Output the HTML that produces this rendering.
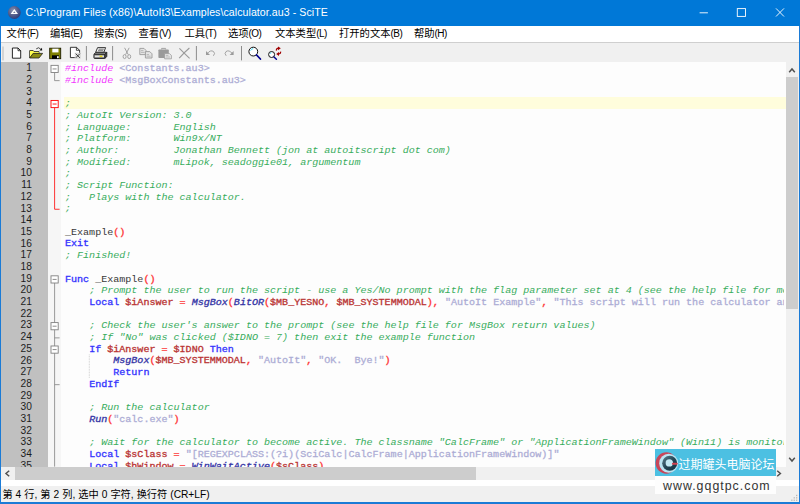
<!DOCTYPE html>
<html><head><meta charset="utf-8"><title>SciTE</title>
<style>
html,body{margin:0;padding:0;}
body{width:800px;height:504px;overflow:hidden;position:relative;background:#f0f0f0;font-family:"Liberation Sans","Noto Sans CJK SC",sans-serif;}
.abs{position:absolute;}
#frame{left:0;top:0;width:800px;height:504px;background:#1b7bd6;}
#title{left:0;top:0;width:800px;height:25.6px;background:#0078d7;}
#ttext{left:25.6px;top:5.2px;color:#fff;font-size:10.6px;line-height:14px;white-space:nowrap;letter-spacing:0.06px;}
#menu{left:1px;top:25.6px;width:798px;height:16.8px;background:#fff;}
#menuline{left:1px;top:42.2px;width:798px;height:1px;background:#cfcfcf;}
.mi{position:absolute;top:27px;font-size:10.3px;line-height:14px;color:#000;white-space:nowrap;}
.mi i{font-style:normal;font-size:10px;letter-spacing:-0.55px;}
#tool{left:1px;top:43.2px;width:798px;height:19.3px;background:#f0f0f0;}
#editor{left:1px;top:62.4px;width:785px;height:404.2px;background:#fdfdfd;}
#nmargin{left:1px;top:62.4px;width:46.5px;height:404.2px;background:#c0c0c0;}
#fmargin{left:47.5px;top:62.4px;width:13.5px;height:404.2px;background:#f6f6f6;}
#caret{left:64.3px;top:97.3px;width:721.7px;height:11.7px;background:#fffddc;}
.ln{position:absolute;left:65px;height:11.69px;line-height:11.69px;font-family:"Liberation Mono",monospace;font-size:10.06px;white-space:pre;color:#000;opacity:0.8;transform-origin:0 8.7px;transform:scaleY(0.88);}
.num{position:absolute;left:1px;width:30.9px;text-align:right;height:11.69px;line-height:11.69px;font-family:"Liberation Sans",sans-serif;font-size:10.2px;color:#000;opacity:0.85;}
.c{color:#009933;font-style:italic;}
.k{color:#0000ff;-webkit-text-stroke:0.35px #0000ff;}
.f{color:#000090;-webkit-text-stroke:0.35px #000090;font-style:italic;}
.v{color:#aa0000;-webkit-text-stroke:0.35px #aa0000;}
.o{color:#ff0000;-webkit-text-stroke:0.35px #ff0000;}
.s{color:#9999cc;-webkit-text-stroke:0.3px #9999cc;}
.p{color:#f000ff;font-style:italic;}
#vscroll{left:786px;top:62.4px;width:12.8px;height:404.2px;background:#f0f0f0;}
#vthumb{left:786px;top:77px;width:12px;height:231.5px;background:#cdcdcd;}
#hscroll{left:1px;top:466.6px;width:798px;height:13.4px;background:#f0f0f0;}
#hthumb{left:15.1px;top:467.3px;width:460.9px;height:12.4px;background:#cdcdcd;}
#band{left:1px;top:480px;width:798px;height:5.8px;background:#fff;}
#status{left:1px;top:485.8px;width:798px;height:16.7px;background:#f0f0f0;}
#stext{left:2.4px;top:487.6px;font-size:10.2px;line-height:14px;color:#000;white-space:nowrap;word-spacing:0.2px;}
#wm1{left:655px;top:449px;width:121px;height:26.7px;background:#4cc0e2;}
#wm2{left:655px;top:475.7px;width:121px;height:18.8px;background:#fdfdfd;}
#wmt{left:678.5px;top:455.3px;font-size:12px;line-height:18px;color:#fff;white-space:nowrap;font-family:"Noto Sans CJK SC",sans-serif;}
#wmu{left:663px;top:477.5px;font-size:12.4px;line-height:16px;color:#333;white-space:nowrap;letter-spacing:1px;font-family:"Liberation Sans",sans-serif;}
svg{position:absolute;left:0;top:0;overflow:visible;}
</style></head><body>
<div id="frame" class="abs"></div>
<div id="title" class="abs"></div>
<div id="ttext" class="abs">C:\Program Files (x86)\AutoIt3\Examples\calculator.au3 - SciTE</div>
<div id="menu" class="abs"></div>
<div id="menuline" class="abs"></div>
<div class="mi" style="left:6.5px">文件<i>(F)</i></div>
<div class="mi" style="left:50px">编辑<i>(E)</i></div>
<div class="mi" style="left:94px">搜索<i>(S)</i></div>
<div class="mi" style="left:138.5px">查看<i>(V)</i></div>
<div class="mi" style="left:184.5px">工具<i>(T)</i></div>
<div class="mi" style="left:228px">选项<i>(O)</i></div>
<div class="mi" style="left:275px">文本类型<i>(L)</i></div>
<div class="mi" style="left:339px">打开的文本<i>(B)</i></div>
<div class="mi" style="left:414px">帮助<i>(H)</i></div>
<div id="tool" class="abs"></div>
<div id="editor" class="abs"></div>
<div id="nmargin" class="abs"></div>
<div id="fmargin" class="abs"></div>
<div id="caret" class="abs"></div>
<div id="codeclip" class="abs" style="left:0;top:62.4px;width:784px;height:404.2px;overflow:hidden;"><div class="abs" style="left:0;top:-62.4px;">
<div class="num" style="top:62.20px">1</div>
<div class="num" style="top:73.89px">2</div>
<div class="num" style="top:85.59px">3</div>
<div class="num" style="top:97.28px">4</div>
<div class="num" style="top:108.97px">5</div>
<div class="num" style="top:120.66px">6</div>
<div class="num" style="top:132.36px">7</div>
<div class="num" style="top:144.05px">8</div>
<div class="num" style="top:155.74px">9</div>
<div class="num" style="top:167.44px">10</div>
<div class="num" style="top:179.13px">11</div>
<div class="num" style="top:190.82px">12</div>
<div class="num" style="top:202.52px">13</div>
<div class="num" style="top:214.21px">14</div>
<div class="num" style="top:225.90px">15</div>
<div class="num" style="top:237.59px">16</div>
<div class="num" style="top:249.29px">17</div>
<div class="num" style="top:260.98px">18</div>
<div class="num" style="top:272.67px">19</div>
<div class="num" style="top:284.37px">20</div>
<div class="num" style="top:296.06px">21</div>
<div class="num" style="top:307.75px">22</div>
<div class="num" style="top:319.45px">23</div>
<div class="num" style="top:331.14px">24</div>
<div class="num" style="top:342.83px">25</div>
<div class="num" style="top:354.52px">26</div>
<div class="num" style="top:366.22px">27</div>
<div class="num" style="top:377.91px">28</div>
<div class="num" style="top:389.60px">29</div>
<div class="num" style="top:401.30px">30</div>
<div class="num" style="top:412.99px">31</div>
<div class="num" style="top:424.68px">32</div>
<div class="num" style="top:436.38px">33</div>
<div class="num" style="top:448.07px">34</div>
<div class="num" style="top:459.76px">35</div>
<div class="ln" style="top:63.10px"><span class="p">#include</span> <span class="s">&lt;Constants.au3&gt;</span></div>
<div class="ln" style="top:74.79px"><span class="p">#include</span> <span class="s">&lt;MsgBoxConstants.au3&gt;</span></div>
<div class="ln" style="top:86.49px"></div>
<div class="ln" style="top:98.18px"><span class="c">;</span></div>
<div class="ln" style="top:109.87px"><span class="c">; AutoIt Version: 3.0</span></div>
<div class="ln" style="top:121.56px"><span class="c">; Language:       English</span></div>
<div class="ln" style="top:133.26px"><span class="c">; Platform:       Win9x/NT</span></div>
<div class="ln" style="top:144.95px"><span class="c">; Author:         Jonathan Bennett (jon at autoitscript dot com)</span></div>
<div class="ln" style="top:156.64px"><span class="c">; Modified:       mLipok, seadoggie01, argumentum</span></div>
<div class="ln" style="top:168.34px"><span class="c">;</span></div>
<div class="ln" style="top:180.03px"><span class="c">; Script Function:</span></div>
<div class="ln" style="top:191.72px"><span class="c">;   Plays with the calculator.</span></div>
<div class="ln" style="top:203.42px"><span class="c">;</span></div>
<div class="ln" style="top:215.11px"></div>
<div class="ln" style="top:226.80px">_Example<span class="o">()</span></div>
<div class="ln" style="top:238.49px"><span class="k">Exit</span></div>
<div class="ln" style="top:250.19px"><span class="c">; Finished!</span></div>
<div class="ln" style="top:261.88px"></div>
<div class="ln" style="top:273.57px"><span class="k">Func</span> _Example<span class="o">()</span></div>
<div class="ln" style="top:285.27px">    <span class="c">; Prompt the user to run the script - use a Yes/No prompt with the flag parameter set at 4 (see the help file for more details)</span></div>
<div class="ln" style="top:296.96px">    <span class="k">Local</span> <span class="v">$iAnswer</span> <span class="o">=</span> <span class="f">MsgBox</span><span class="o">(</span><span class="f">BitOR</span><span class="o">(</span><span class="v">$MB_YESNO</span><span class="o">,</span> <span class="v">$MB_SYSTEMMODAL</span><span class="o">),</span> <span class="s">"AutoIt Example"</span><span class="o">,</span> <span class="s">"This script will run the calculator and type in 2 x 4 x 8 x 16 and then quit.  Do you want to run it?"</span><span class="o">)</span></div>
<div class="ln" style="top:308.65px"></div>
<div class="ln" style="top:320.35px">    <span class="c">; Check the user's answer to the prompt (see the help file for MsgBox return values)</span></div>
<div class="ln" style="top:332.04px">    <span class="c">; If "No" was clicked ($IDNO = 7) then exit the example function</span></div>
<div class="ln" style="top:343.73px">    <span class="k">If</span> <span class="v">$iAnswer</span> <span class="o">=</span> <span class="v">$IDNO</span> <span class="k">Then</span></div>
<div class="ln" style="top:355.42px">        <span class="f">MsgBox</span><span class="o">(</span><span class="v">$MB_SYSTEMMODAL</span><span class="o">,</span> <span class="s">"AutoIt"</span><span class="o">,</span> <span class="s">"OK.  Bye!"</span><span class="o">)</span></div>
<div class="ln" style="top:367.12px">        <span class="k">Return</span></div>
<div class="ln" style="top:378.81px">    <span class="k">EndIf</span></div>
<div class="ln" style="top:390.50px"></div>
<div class="ln" style="top:402.20px">    <span class="c">; Run the calculator</span></div>
<div class="ln" style="top:413.89px">    <span class="f">Run</span><span class="o">(</span><span class="s">"calc.exe"</span><span class="o">)</span></div>
<div class="ln" style="top:425.58px"></div>
<div class="ln" style="top:437.28px">    <span class="c">; Wait for the calculator to become active. The classname "CalcFrame" or "ApplicationFrameWindow" (Win11) is monitored instead of the window title</span></div>
<div class="ln" style="top:448.97px">    <span class="k">Local</span> <span class="v">$sClass</span> <span class="o">=</span> <span class="s">"[REGEXPCLASS:(?i)(SciCalc|CalcFrame|ApplicationFrameWindow)]"</span></div>
<div class="ln" style="top:460.66px">    <span class="k">Local</span> <span class="v">$hWindow</span> <span class="o">=</span> <span class="f">WinWaitActive</span><span class="o">(</span><span class="v">$sClass</span><span class="o">)</span></div>
</div></div>
<div id="vscroll" class="abs"></div>
<div id="vthumb" class="abs"></div>
<div id="hscroll" class="abs"></div>
<div id="hthumb" class="abs"></div>
<div id="band" class="abs"></div>
<div id="status" class="abs"></div>
<div id="stext" class="abs">第 4 行, 第 2 列, 选中 0 字符, 换行符 (CR+LF)</div>
<svg width="800" height="504" viewBox="0 0 800 504">
<line x1="54.6" y1="72.55" x2="54.6" y2="80.64" stroke="#808080" stroke-width="0.8"/>
<line x1="54.6" y1="80.64" x2="59.60" y2="80.64" stroke="#808080" stroke-width="0.8"/>
<rect x="51.00" y="65.35" width="7.2" height="7.2" fill="#fff" stroke="#808080" stroke-width="0.9"/>
<line x1="52.60" y1="68.95" x2="56.60" y2="68.95" stroke="#808080" stroke-width="0.9"/>
<line x1="54.6" y1="107.63" x2="54.6" y2="209.26" stroke="#ff0000" stroke-width="0.8"/>
<line x1="54.6" y1="209.26" x2="59.60" y2="209.26" stroke="#ff0000" stroke-width="0.8"/>
<rect x="51.00" y="100.43" width="7.2" height="7.2" fill="#fff" stroke="#ff0000" stroke-width="0.9"/>
<line x1="52.60" y1="104.03" x2="56.60" y2="104.03" stroke="#ff0000" stroke-width="0.9"/>
<line x1="54.6" y1="283.02" x2="54.6" y2="466.60" stroke="#808080" stroke-width="0.8"/>
<line x1="54.6" y1="337.89" x2="59.60" y2="337.89" stroke="#808080" stroke-width="0.8"/>
<line x1="54.6" y1="384.66" x2="59.60" y2="384.66" stroke="#808080" stroke-width="0.8"/>
<rect x="51.00" y="275.82" width="7.2" height="7.2" fill="#fff" stroke="#808080" stroke-width="0.9"/>
<line x1="52.60" y1="279.42" x2="56.60" y2="279.42" stroke="#808080" stroke-width="0.9"/>
<rect x="51.00" y="322.59" width="7.2" height="7.2" fill="#fff" stroke="#808080" stroke-width="0.9"/>
<line x1="52.60" y1="326.19" x2="56.60" y2="326.19" stroke="#808080" stroke-width="0.9"/>
<rect x="51.00" y="345.98" width="7.2" height="7.2" fill="#fff" stroke="#808080" stroke-width="0.9"/>
<line x1="52.60" y1="349.58" x2="56.60" y2="349.58" stroke="#808080" stroke-width="0.9"/>
<line x1="89.3" y1="354.52" x2="89.3" y2="377.91" stroke="#c0c0c0" stroke-width="0.8" stroke-dasharray="0.8,0.8"/>
<line x1="3" y1="46.5" x2="3" y2="60.4" stroke="#b8b8b8" stroke-width="1"/>
<line x1="86.4" y1="46" x2="86.4" y2="60.4" stroke="#8c8c8c" stroke-width="1"/>
<line x1="112.6" y1="46" x2="112.6" y2="60.4" stroke="#8c8c8c" stroke-width="1"/>
<line x1="196.4" y1="46" x2="196.4" y2="60.4" stroke="#8c8c8c" stroke-width="1"/>
<line x1="241.5" y1="46" x2="241.5" y2="60.4" stroke="#8c8c8c" stroke-width="1"/>
<path d="M12.4 48 H18 L20.7 50.7 V58.2 H12.4 Z" fill="#fff" stroke="#111" stroke-width="0.9" stroke-linejoin="round"/>
<path d="M18 48 V50.7 H20.7" fill="none" stroke="#111" stroke-width="0.8"/>
<path d="M29.7 58 V50.6 H33.2 L34 51.6 H39 V53.6" fill="#808000" stroke="#222" stroke-width="0.8"/>
<path d="M30 51 V57.2 L33 53.2 H38.8 V52 H34 L33.2 51 Z" fill="#ffff50" stroke="none"/>
<path d="M29.7 58 L33.2 53.4 H42.6 L39 58 Z" fill="#8a8a10" stroke="#222" stroke-width="0.8" stroke-linejoin="round"/>
<path d="M36.2 48.9 Q38.6 46.4 40.8 49.2" fill="none" stroke="#333" stroke-width="0.9"/>
<path d="M39.4 50.4 L42.2 50.6 L42 47.8 Z" fill="#111"/>
<rect x="49.7" y="48.2" width="11" height="10.5" fill="#808000" stroke="#1c1c00" stroke-width="0.9"/>
<rect x="52.3" y="48.7" width="6.2" height="3.7" fill="#fff"/>
<rect x="52" y="55.3" width="7" height="3.6" fill="#000"/>
<rect x="57" y="56.2" width="1.7" height="2" fill="#fff"/>
<path d="M70.4 47.3 H76.4 L79.6 50.3 V57.6 H70.4 Z" fill="#fff" stroke="#222" stroke-width="0.9" stroke-linejoin="round"/>
<path d="M76.4 47.3 V50.3 H79.6" fill="none" stroke="#222" stroke-width="0.8"/>
<rect x="74.7" y="52.7" width="6.1" height="6.1" fill="#dcdcdc"/>
<path d="M75.7 53.7 L79.9 57.9 M79.9 53.7 L75.7 57.9" stroke="#222" stroke-width="0.8"/>
<path d="M95.6 52.4 L97.6 47.6 H105.6 L103.8 52.4 Z" fill="#f4f4f4" stroke="#222" stroke-width="0.9" stroke-linejoin="round"/>
<path d="M98.6 49.2 H103.8 M98 50.7 H103.2" stroke="#444" stroke-width="0.7"/>
<path d="M93.9 54.4 L95.8 52.3 H106.6 L105 54.4 Z" fill="#9a9a9a" stroke="#222" stroke-width="0.9" stroke-linejoin="round"/>
<rect x="93.9" y="54.3" width="11" height="4.2" rx="0.8" fill="#8a8a8a" stroke="#222" stroke-width="0.9"/>
<path d="M104.9 54.3 L106.8 52.4 V56.4 L104.9 58.5 Z" fill="#505050" stroke="#222" stroke-width="0.9" stroke-linejoin="round"/>
<rect x="94.8" y="55.6" width="9.2" height="1.3" fill="#eee"/>
<rect x="99.6" y="55.6" width="2.8" height="1.3" fill="#e6d800"/>
<path d="M124.6 47.8 L128.2 54.6 M129.2 47.8 L125.6 54.6" stroke="#9a9a9a" stroke-width="0.9" fill="none"/>
<ellipse cx="124.6" cy="56.6" rx="1.5" ry="2" fill="none" stroke="#9a9a9a" stroke-width="0.9"/>
<ellipse cx="129.2" cy="56.6" rx="1.5" ry="2" fill="none" stroke="#9a9a9a" stroke-width="0.9"/>
<path d="M139.8 48.4 H144 L146 50.4 V54.6 H139.8 Z" fill="#e4e4e4" stroke="#9a9a9a" stroke-width="0.9"/>
<path d="M145.4 51.6 H149.8 L152 53.8 V58 H145.4 Z" fill="#e4e4e4" stroke="#9a9a9a" stroke-width="0.9"/>
<path d="M141 50.6 H143.4 M141 52.4 H144.6 M146.6 54.6 H149 M146.6 56.2 H150.6" stroke="#9a9a9a" stroke-width="0.6"/>
<rect x="158.4" y="49.4" width="10.4" height="8.6" rx="0.8" fill="#9a9a9a"/>
<path d="M161.6 49.4 V48.4 H165.6 V49.4" fill="none" stroke="#9a9a9a" stroke-width="0.9"/>
<path d="M164.6 53.6 H169.4 L171.4 55.4 V58.8 H164.6 Z" fill="#e8e8e8" stroke="#9a9a9a" stroke-width="0.8"/>
<path d="M165.8 55.4 H168.4 M165.8 57 H170" stroke="#9a9a9a" stroke-width="0.6"/>
<path d="M179.4 48.4 Q184 53 189.6 58.4" stroke="#9a9a9a" stroke-width="1.1" fill="none"/>
<path d="M189.4 48 Q184 52.6 179.2 58.2" stroke="#9a9a9a" stroke-width="1.1" fill="none"/>
<path d="M206 51 L206 55 L210 55 Z" fill="#9a9a9a"/>
<path d="M207.2 53.6 Q210.6 49.4 213.6 51.6 Q215.6 53.4 213.4 55.8" fill="none" stroke="#9a9a9a" stroke-width="0.9"/>
<path d="M233.6 51 L233.6 55 L229.6 55 Z" fill="#9a9a9a"/>
<path d="M232.4 53.6 Q229 49.4 226 51.6 Q224 53.4 226.2 55.8" fill="none" stroke="#9a9a9a" stroke-width="0.9"/>
<circle cx="253.3" cy="51.6" r="4.4" fill="#fff" stroke="#111" stroke-width="1"/>
<path d="M250.6 50.6 Q251.4 48.8 253.2 48.6" fill="none" stroke="#40e0ff" stroke-width="1"/>
<path d="M256.6 55 L260.4 59" stroke="#000090" stroke-width="1.8" stroke-linecap="round"/>
<circle cx="271.6" cy="54.5" r="3" fill="#fff" stroke="#111" stroke-width="1"/>
<path d="M270 54 Q270.4 52.8 271.6 52.6" fill="none" stroke="#40e0ff" stroke-width="0.8"/>
<path d="M274 57 L276.4 59.2" stroke="#000090" stroke-width="1.5" stroke-linecap="round"/>
<path d="M276.4 50.6 Q276.2 48.4 278.4 48.2" fill="none" stroke="#a00000" stroke-width="1.2"/>
<path d="M278 46.4 L280.8 48.3 L278 50.2 Z" fill="#a00000"/>
<path d="M280.6 51.6 Q280.8 53.8 278.6 54" fill="none" stroke="#a00000" stroke-width="1.2"/>
<path d="M279 52.1 L276.2 54 L279 55.9 Z" fill="#a00000"/>
<defs><radialGradient id="ag" cx="0.4" cy="0.35" r="0.7"><stop offset="0" stop-color="#8d94b2"/><stop offset="0.55" stop-color="#545e8c"/><stop offset="1" stop-color="#2c3a78"/></radialGradient></defs>
<circle cx="14.3" cy="12.5" r="6.4" fill="url(#ag)"/>
<path d="M14.3 9 L18 14.1 H10.6 Z M14.3 11.3 L13.1 13 H15.5 Z" fill="#fff" fill-rule="evenodd"/>
<line x1="699.6" y1="12.8" x2="707.9" y2="12.8" stroke="#fff" stroke-width="0.9"/>
<rect x="737.3" y="8.6" width="8.2" height="7.8" fill="none" stroke="#fff" stroke-width="0.9"/>
<path d="M776 8.4 L784 16.5 M784 8.4 L776 16.5" stroke="#fff" stroke-width="0.9"/>
<path d="M789.2 72.2 L792 69 L794.8 72.2" fill="none" stroke="#505050" stroke-width="1.5"/>
<path d="M789.2 457.8 L792 461 L794.8 457.8" fill="none" stroke="#505050" stroke-width="1.5"/>
<path d="M9.2 470.8 L6 473.5 L9.2 476.2" fill="none" stroke="#505050" stroke-width="1.5"/>
<path d="M777.2 470.8 L780.4 473.5 L777.2 476.2" fill="none" stroke="#505050" stroke-width="1.5"/>
<rect x="796.0" y="499.6" width="1.3" height="1.3" fill="#b8b8b8"/>
<rect x="793.6" y="499.6" width="1.3" height="1.3" fill="#b8b8b8"/>
<rect x="791.2" y="499.6" width="1.3" height="1.3" fill="#b8b8b8"/>
<rect x="796.0" y="497.2" width="1.3" height="1.3" fill="#b8b8b8"/>
<rect x="793.6" y="497.2" width="1.3" height="1.3" fill="#b8b8b8"/>
<rect x="796.0" y="494.8" width="1.3" height="1.3" fill="#b8b8b8"/>
</svg>
<div id="wm1" class="abs"></div>
<div id="wm2" class="abs"></div>
<div id="wmt" class="abs">过期罐头电脑论坛</div>
<div id="wmu" class="abs">www.gqgtpc.com</div>
<svg width="800" height="504" viewBox="0 0 800 504">
<defs><linearGradient id="lg" x1="0" y1="0" x2="1" y2="1"><stop offset="0" stop-color="#5f8290"/><stop offset="0.5" stop-color="#234656"/><stop offset="1" stop-color="#12303e"/></linearGradient></defs>
<circle cx="666.3" cy="463" r="10.7" fill="#c8465a"/>
<circle cx="668.7" cy="463.3" r="9.5" fill="#b9e5f3"/>
<circle cx="669.7" cy="463.2" r="7.5" fill="url(#lg)"/>
<circle cx="669.3" cy="462.9" r="3.7" fill="#c2e9f4"/>
<rect x="671.9" y="462.7" width="5.8" height="2" rx="1" fill="#d2414f"/>
</svg>
</body></html>
